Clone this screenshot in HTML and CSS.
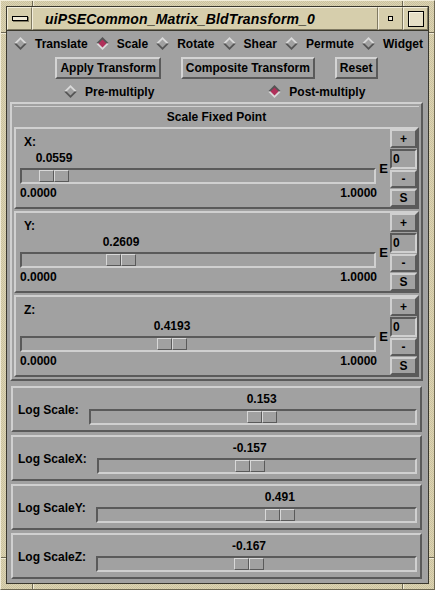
FILE: index.html
```html
<!DOCTYPE html>
<html>
<head>
<meta charset="utf-8">
<title>uiPSECommon_Matrix_BldTransform_0</title>
<link rel="stylesheet" href="styles.css">
</head>
<body>
<div class="window">
  <span class="notch notch-h notch-t1"></span>
  <span class="notch notch-h notch-t2"></span>
  <span class="notch notch-h notch-b1"></span>
  <span class="notch notch-h notch-b2"></span>
  <span class="notch notch-v notch-l1"></span>
  <span class="notch notch-v notch-l2"></span>
  <span class="notch notch-v notch-r1"></span>
  <span class="notch notch-v notch-r2"></span>
  <div class="inner">
    <div class="titlebar">
      <div class="tb-btn tb-menu"><span class="menu-bar"></span></div>
      <div class="tb-title">uiPSECommon_Matrix_BldTransform_0</div>
      <div class="tb-btn tb-min"><span class="min-dot"></span></div>
      <div class="tb-btn tb-max"><span class="max-box"></span></div>
    </div>
    <div class="client">
      <div class="radio-row">
        <div class="radio"><svg class="diamond" viewBox="0 0 13 13"><polygon class="dm-top" points="0,6.5 6.5,0 13,6.5"/><polygon class="dm-bot" points="0,6.5 6.5,13 13,6.5"/><polygon class="dm-fill" points="6.5,2.5 10.5,6.5 6.5,10.5 2.5,6.5"/></svg><span>Translate</span></div>
        <div class="radio on"><svg class="diamond" viewBox="0 0 13 13"><polygon class="dm-top" points="0,6.5 6.5,0 13,6.5"/><polygon class="dm-bot" points="0,6.5 6.5,13 13,6.5"/><polygon class="dm-fill" points="6.5,2.5 10.5,6.5 6.5,10.5 2.5,6.5"/></svg><span>Scale</span></div>
        <div class="radio"><svg class="diamond" viewBox="0 0 13 13"><polygon class="dm-top" points="0,6.5 6.5,0 13,6.5"/><polygon class="dm-bot" points="0,6.5 6.5,13 13,6.5"/><polygon class="dm-fill" points="6.5,2.5 10.5,6.5 6.5,10.5 2.5,6.5"/></svg><span>Rotate</span></div>
        <div class="radio"><svg class="diamond" viewBox="0 0 13 13"><polygon class="dm-top" points="0,6.5 6.5,0 13,6.5"/><polygon class="dm-bot" points="0,6.5 6.5,13 13,6.5"/><polygon class="dm-fill" points="6.5,2.5 10.5,6.5 6.5,10.5 2.5,6.5"/></svg><span>Shear</span></div>
        <div class="radio"><svg class="diamond" viewBox="0 0 13 13"><polygon class="dm-top" points="0,6.5 6.5,0 13,6.5"/><polygon class="dm-bot" points="0,6.5 6.5,13 13,6.5"/><polygon class="dm-fill" points="6.5,2.5 10.5,6.5 6.5,10.5 2.5,6.5"/></svg><span>Permute</span></div>
        <div class="radio"><svg class="diamond" viewBox="0 0 13 13"><polygon class="dm-top" points="0,6.5 6.5,0 13,6.5"/><polygon class="dm-bot" points="0,6.5 6.5,13 13,6.5"/><polygon class="dm-fill" points="6.5,2.5 10.5,6.5 6.5,10.5 2.5,6.5"/></svg><span>Widget</span></div>
      </div>

      <div class="button-row">
        <div class="pbutton">Apply Transform</div>
        <div class="pbutton">Composite Transform</div>
        <div class="pbutton">Reset</div>
      </div>

      <div class="mult-row">
        <div class="radio"><svg class="diamond" viewBox="0 0 13 13"><polygon class="dm-top" points="0,6.5 6.5,0 13,6.5"/><polygon class="dm-bot" points="0,6.5 6.5,13 13,6.5"/><polygon class="dm-fill" points="6.5,2.5 10.5,6.5 6.5,10.5 2.5,6.5"/></svg><span>Pre-multiply</span></div>
        <div class="radio on"><svg class="diamond" viewBox="0 0 13 13"><polygon class="dm-top" points="0,6.5 6.5,0 13,6.5"/><polygon class="dm-bot" points="0,6.5 6.5,13 13,6.5"/><polygon class="dm-fill" points="6.5,2.5 10.5,6.5 6.5,10.5 2.5,6.5"/></svg><span>Post-multiply</span></div>
      </div>

      <div class="scale-frame">
        <div class="scale-title">Scale Fixed Point</div>

        <div class="axis">
          <div class="axis-main">
            <div class="axis-label">X:</div>
            <div class="value-row"><div class="value" style="margin-left:19px">0.0559</div></div>
            <div class="trough"><div class="thumb" style="margin-left:17px"><span></span><span></span></div></div>
            <div class="range-row"><span>0.0000</span><span>1.0000</span></div>
          </div>
          <div class="axis-e">E</div>
          <div class="axis-btns">
            <div class="sbtn">+</div>
            <div class="field">0</div>
            <div class="sbtn">-</div>
            <div class="sbtn">S</div>
          </div>
        </div>

        <div class="axis">
          <div class="axis-main">
            <div class="axis-label">Y:</div>
            <div class="value-row"><div class="value" style="margin-left:86px">0.2609</div></div>
            <div class="trough"><div class="thumb" style="margin-left:84px"><span></span><span></span></div></div>
            <div class="range-row"><span>0.0000</span><span>1.0000</span></div>
          </div>
          <div class="axis-e">E</div>
          <div class="axis-btns">
            <div class="sbtn">+</div>
            <div class="field">0</div>
            <div class="sbtn">-</div>
            <div class="sbtn">S</div>
          </div>
        </div>

        <div class="axis">
          <div class="axis-main">
            <div class="axis-label">Z:</div>
            <div class="value-row"><div class="value" style="margin-left:137px">0.4193</div></div>
            <div class="trough"><div class="thumb" style="margin-left:135px"><span></span><span></span></div></div>
            <div class="range-row"><span>0.0000</span><span>1.0000</span></div>
          </div>
          <div class="axis-e">E</div>
          <div class="axis-btns">
            <div class="sbtn">+</div>
            <div class="field">0</div>
            <div class="sbtn">-</div>
            <div class="sbtn">S</div>
          </div>
        </div>
      </div>

      <div class="log">
        <div class="log-label">Log Scale:</div>
        <div class="log-slider">
          <div class="value-row"><div class="value" style="margin-left:158px">0.153</div></div>
          <div class="trough"><div class="thumb" style="margin-left:156px"><span></span><span></span></div></div>
        </div>
      </div>
      <div class="log">
        <div class="log-label">Log ScaleX:</div>
        <div class="log-slider">
          <div class="value-row"><div class="value" style="margin-left:138px">-0.157</div></div>
          <div class="trough"><div class="thumb" style="margin-left:136px"><span></span><span></span></div></div>
        </div>
      </div>
      <div class="log">
        <div class="log-label">Log ScaleY:</div>
        <div class="log-slider">
          <div class="value-row"><div class="value" style="margin-left:169px">0.491</div></div>
          <div class="trough"><div class="thumb" style="margin-left:167px"><span></span><span></span></div></div>
        </div>
      </div>
      <div class="log">
        <div class="log-label">Log ScaleZ:</div>
        <div class="log-slider">
          <div class="value-row"><div class="value" style="margin-left:138px">-0.167</div></div>
          <div class="trough"><div class="thumb" style="margin-left:136px"><span></span><span></span></div></div>
        </div>
      </div>
    </div>
  </div>
</div>
</body>
</html>
```

FILE: styles.css
```css
* { box-sizing: border-box; }

html, body {
  margin: 0;
  padding: 0;
}

body {
  width: 435px;
  height: 590px;
  overflow: hidden;
  font-family: "Liberation Sans", Arial, sans-serif;
  font-weight: bold;
  font-size: 12px;
  color: #000;
  background: #d4cba8;
}

.window {
  position: relative;
  width: 435px;
  height: 590px;
  padding: 5px;
  border: 1px solid;
  border-color: #f1ecd8 #6e6852 #6e6852 #f1ecd8;
  background-color: #d4cba8;
  background-image: repeating-conic-gradient(#dcd4b4 0 25%, #cbc29e 0 50%);
  background-size: 2px 2px;
}

.notch { position: absolute; }
.notch-h {
  width: 2px;
  height: 5px;
  background: linear-gradient(to right, #6e6852 50%, #f1ecd8 50%);
}
.notch-v {
  width: 5px;
  height: 2px;
  background: linear-gradient(to bottom, #6e6852 50%, #f1ecd8 50%);
}
.notch-t1 { top: 0; left: 31px; }
.notch-t2 { top: 0; left: 401px; }
.notch-b1 { bottom: 0; left: 31px; }
.notch-b2 { bottom: 0; left: 401px; }
.notch-l1 { left: 0; top: 31px; }
.notch-l2 { left: 0; top: 556px; }
.notch-r1 { right: 0; top: 31px; }
.notch-r2 { right: 0; top: 556px; }

.inner {
  width: 100%;
  height: 100%;
  border: 1px solid #3a382e;
  display: flex;
  flex-direction: column;
}

/* ---------- title bar ---------- */
.titlebar {
  height: 24px;
  flex: none;
  display: flex;
  background: #d6ceac;
  border-bottom: 1px solid #3a382e;
}

.tb-btn {
  width: 25px;
  flex: none;
  border: 1px solid;
  border-color: #f3eedc #807a62 #807a62 #f3eedc;
  display: flex;
  align-items: center;
  justify-content: center;
}

.tb-title {
  flex: 1;
  border: 1px solid;
  border-color: #f3eedc #807a62 #807a62 #f3eedc;
  padding-left: 12px;
  font-style: italic;
  font-weight: bold;
  font-size: 14px;
  letter-spacing: 0.15px;
  line-height: 22px;
  white-space: nowrap;
  overflow: hidden;
}

.menu-bar {
  width: 16px;
  height: 5px;
  border: 1px solid #000;
  background: #efe9d6;
  box-shadow: 1px 1px 0 #807a62;
}

.min-dot {
  width: 5px;
  height: 5px;
  border: 1px solid #000;
  background: #efe9d6;
}

.max-box {
  width: 16px;
  height: 16px;
  border: 1px solid #000;
  background: #e6dfc6;
  box-shadow: inset 1px 1px 0 #f7f3e4;
}

/* ---------- client ---------- */
.client {
  flex: 1;
  background: #a1a1a1;
  display: flex;
  flex-direction: column;
  padding: 4px 5px 0 3px;
}

.radio {
  display: flex;
  align-items: center;
  gap: 8px;
  white-space: nowrap;
}

.radio span { padding-top: 1px; }

.diamond {
  width: 13px;
  height: 13px;
  flex: none;
}
.dm-top { fill: #dadada; }
.dm-bot { fill: #555555; }
.dm-fill { fill: #a1a1a1; }
.radio.on .dm-top { fill: #555555; }
.radio.on .dm-bot { fill: #dadada; }
.radio.on .dm-fill { fill: #b0305a; }

.radio-row {
  height: 16px;
  display: flex;
  justify-content: space-between;
  align-items: center;
  padding-left: 4px;
}

.button-row {
  margin-top: 6px;
  height: 22px;
  display: flex;
  justify-content: center;
  gap: 20px;
}

.pbutton {
  height: 22px;
  padding: 1px 3px 0;
  border: 2px solid;
  border-color: #d4d4d4 #5a5a5a #5a5a5a #d4d4d4;
  line-height: 17px;
  white-space: nowrap;
}

.mult-row {
  margin-top: 3px;
  height: 18px;
  display: flex;
  align-items: center;
  padding-left: 54px;
  gap: 114px;
}

/* ---------- scale fixed point ---------- */
.scale-frame {
  margin-top: 2px;
  height: 279px;
  flex: none;
  border: 2px solid;
  border-color: #d0d0d0 #5a5a5a #5a5a5a #d0d0d0;
  padding: 2px;
  display: flex;
  flex-direction: column;
  gap: 2px;
}

.scale-title {
  height: 19px;
  line-height: 20px;
  text-align: center;
  border-top: 1px solid #d0d0d0;
}

.axis {
  height: 82px;
  flex: none;
  border: 2px solid;
  border-color: #d0d0d0 #5a5a5a #5a5a5a #d0d0d0;
  display: flex;
}

.axis-main {
  width: 361px;
  flex: none;
  padding: 6px 0 0 4px;
  display: flex;
  flex-direction: column;
}

.axis-label {
  height: 14px;
  line-height: 15px;
  padding-left: 4px;
}

.value-row {
  margin-top: 2px;
  height: 14px;
  display: flex;
}

.value {
  width: 30px;
  height: 14px;
  line-height: 15px;
  display: flex;
  justify-content: center;
  white-space: nowrap;
  flex: none;
}

.trough {
  margin-top: 3px;
  width: 356px;
  height: 16px;
  border: 2px solid;
  border-color: #5a5a5a #d0d0d0 #d0d0d0 #5a5a5a;
  display: flex;
}

.thumb {
  width: 30px;
  height: 12px;
  flex: none;
  display: flex;
}
.thumb span {
  flex: 1;
  border: 1px solid;
  border-color: #d8d8d8 #5a5a5a #5a5a5a #d8d8d8;
}

.range-row {
  margin-top: 2px;
  height: 14px;
  line-height: 15px;
  display: flex;
  justify-content: space-between;
}

.axis-e {
  width: 13px;
  flex: none;
  display: flex;
  align-items: center;
  justify-content: center;
  font-size: 13px;
}

.axis-btns {
  flex: 1;
  display: flex;
  flex-direction: column;
  gap: 1px;
}

.sbtn {
  height: 18px;
  border: 2px solid;
  border-color: #d0d0d0 #5a5a5a #5a5a5a #d0d0d0;
  display: flex;
  align-items: center;
  justify-content: center;
  line-height: 14px;
}
.sbtn:first-child { height: 19px; }

.field {
  height: 20px;
  border: 2px solid;
  border-color: #5a5a5a #d0d0d0 #d0d0d0 #5a5a5a;
  padding-left: 1px;
  line-height: 16px;
}

/* ---------- log sliders ---------- */
.log {
  margin: 3px 1px 0 1px;
  height: 46px;
  flex: none;
  border: 2px solid;
  border-color: #d0d0d0 #5a5a5a #5a5a5a #d0d0d0;
  display: flex;
  align-items: center;
}
.scale-frame + .log { margin-top: 5px; }

.log-label {
  padding-left: 5px;
  padding-top: 1px;
  white-space: nowrap;
  flex: none;
}

.log-slider {
  flex: 1;
  align-self: stretch;
  margin: 0 3px 0 10px;
  padding-top: 4px;
  display: flex;
  flex-direction: column;
}
.log-slider .value-row { margin-top: 0; }
.log-slider .trough { width: 100%; }
```
